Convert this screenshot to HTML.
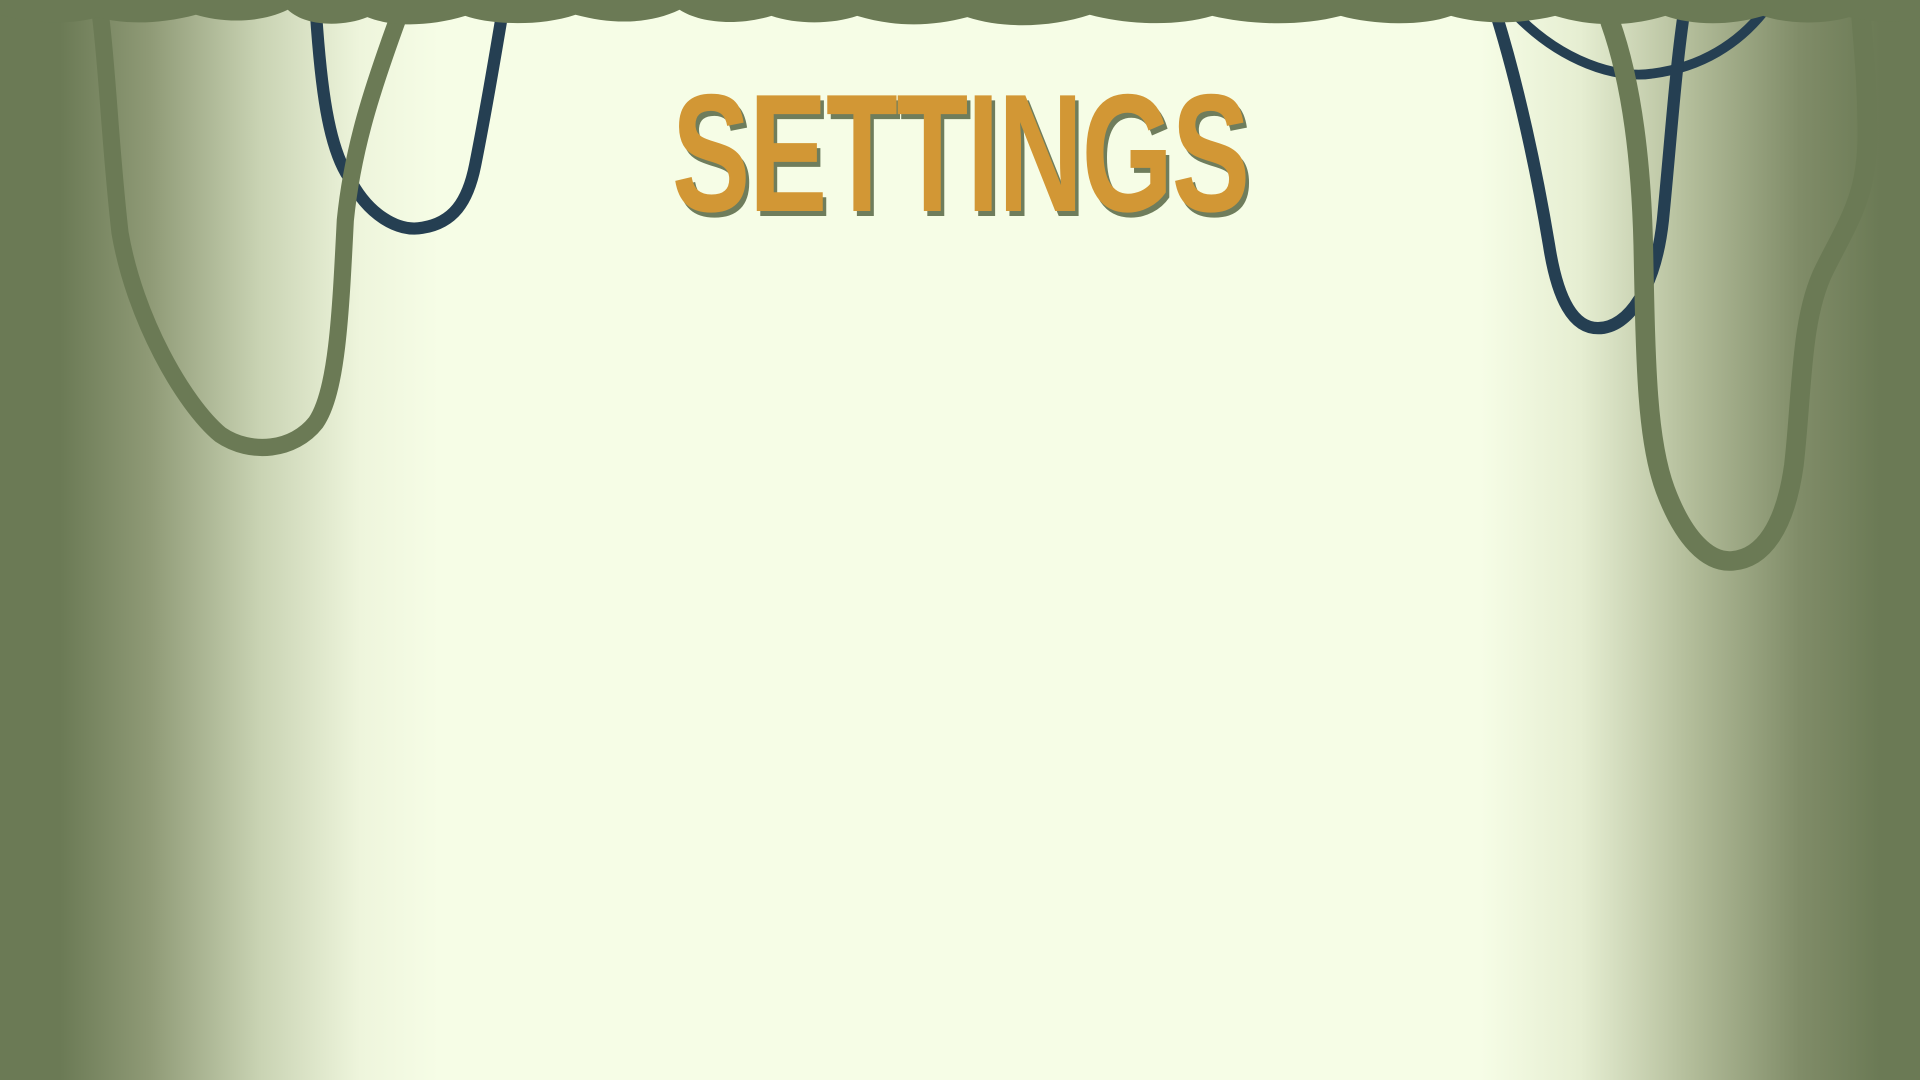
<!DOCTYPE html>
<html><head><meta charset="utf-8"><style>
html,body{margin:0;padding:0;width:1920px;height:1080px;overflow:hidden}
body{background:linear-gradient(90deg,#6b7a55 0px,#6b7a55 60px,#8f9a76 150px,#c9d3b3 260px,#eef5dc 360px,#f6fde6 440px,#f6fde6 1480px,#e6eed2 1580px,#b3bd9a 1690px,#808c68 1800px,#6b7a55 1880px);position:relative}
h1{position:absolute;left:0;top:58px;width:1920px;margin:0;text-align:center;font-family:"Liberation Sans",sans-serif;font-weight:bold;font-size:168px;line-height:190px;color:#d29735;text-shadow:5px 5px 0 #6f7d5c;transform:scaleX(0.7);transform-origin:961px 0;letter-spacing:-2px}
svg{position:absolute;left:0;top:0}
</style></head><body>
<svg width="1920" height="1080" viewBox="0 0 1568 882" preserveAspectRatio="none">
<g fill="none" stroke-linecap="round">
<path d="M258 10 C262 70 268 120 285 145 C300 175 325 190 345 186 C370 182 382 165 388 135 C395 100 402 60 410 12" stroke="#253f52" stroke-width="10"/>
<path d="M82 12 C88 60 90 120 98 190 C110 260 150 330 180 355 C205 372 240 368 258 345 C275 320 278 260 282 180 C288 120 305 70 325 15" stroke="#6b7a55" stroke-width="14"/>
<path d="M1238 12 C1275 50 1320 65 1350 60 C1390 55 1420 35 1440 10" stroke="#253f52" stroke-width="8"/>
<path d="M1222 12 C1240 70 1255 140 1265 200 C1272 245 1285 268 1305 268 C1330 268 1352 235 1358 180 C1364 120 1368 60 1375 12" stroke="#253f52" stroke-width="10"/>
<path d="M1315 18 C1330 60 1340 120 1342 200 C1344 300 1345 360 1360 400 C1375 440 1395 460 1415 458 C1440 456 1458 430 1465 380 C1472 320 1470 260 1490 220 C1510 180 1525 160 1525 110 C1525 70 1522 40 1520 15" stroke="#6b7a55" stroke-width="16"/>
</g>
<path d="M0 0 H1568 V14 C1550 20 1530 18 1510 14 C1490 20 1460 20 1440 13 C1410 22 1380 20 1360 13 C1330 22 1300 22 1270 13 C1240 20 1210 20 1185 13 C1160 22 1120 20 1095 13 C1060 22 1020 20 990 13 C960 22 920 20 890 12 C860 22 820 24 790 14 C760 22 730 22 700 13 C680 20 650 20 630 13 C600 22 570 18 555 8 C530 20 500 20 470 12 C440 22 400 20 380 13 C350 22 320 22 300 14 C280 22 250 22 235 8 C210 20 180 18 160 12 C130 20 100 20 80 14 C60 20 30 20 0 12 Z" fill="#6b7a55"/>
</svg>
<h1>SETTINGS</h1>
</body></html>
